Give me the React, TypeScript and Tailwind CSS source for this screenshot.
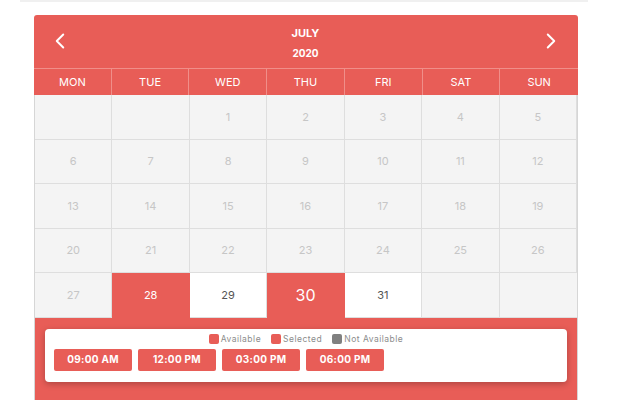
import { ChevronLeft, ChevronRight } from "lucide-react";

type Day = { n?: number; state?: "past" | "open" | "picked" | "today" };

const weekdays = ["MON", "TUE", "WED", "THU", "FRI", "SAT", "SUN"];

const days: Day[] = [
  {}, {},
  ...Array.from({ length: 27 }, (_, i) => ({ n: i + 1, state: "past" as const })),
  { n: 28, state: "picked" },
  { n: 29, state: "open" },
  { n: 30, state: "today" },
  { n: 31, state: "open" },
  {}, {},
];

const slots = ["09:00 AM", "12:00 PM", "03:00 PM", "06:00 PM"];

function Cell({ day }: { day: Day }) {
  const base = "h-[44.6px] flex items-center justify-center border-r border-b border-[#dedede] last:border-r-0";
  if (day.state === "picked")
    return <div className={`${base} bg-[#e85d57] text-white text-[11px] border-[#e85d57]`}>{day.n}</div>;
  if (day.state === "today")
    return <div className={`${base} bg-[#e85d57] text-white text-[16px] border-[#e85d57]`}>{day.n}</div>;
  if (day.state === "open")
    return <div className={`${base} bg-white text-[#555] text-[11px]`}>{day.n}</div>;
  return <div className={`${base} bg-[#f4f4f4] text-[#c6c6c6] text-[11px]`}>{day.n}</div>;
}

export default function App() {
  return (
    <div className="w-[620px] h-[400px] overflow-hidden bg-white font-['Inter',sans-serif]">
      <div className="ml-[20px] w-[568px] h-[2px] bg-[#f0f0f0]" />
      <div className="mt-[13px] ml-[34px] w-[544px]">
        {/* header */}
        <div className="bg-[#e85d57] rounded-t-[3px] h-[53px] flex items-center justify-between pl-[13px] pr-[14px] text-white">
          <ChevronLeft className="w-[26px] h-[26px] -mt-[2px]" strokeWidth={1.8} />
          <div className="flex flex-col items-center font-bold leading-none">
            <span className="text-[11px] mt-[2px]">JULY</span>
            <span className="text-[10px] mt-[9px]">2020</span>
          </div>
          <ChevronRight className="w-[26px] h-[26px] -mt-[2px]" strokeWidth={1.8} />
        </div>

        {/* weekday names */}
        <div className="grid grid-cols-7 bg-[#e85d57] border-t border-[#f08e89]">
          {weekdays.map((d) => (
            <div
              key={d}
              className="h-[26px] flex items-center justify-center text-white text-[11px] border-r border-[#f08e89] last:border-r-0"
            >
              {d}
            </div>
          ))}
        </div>

        {/* days */}
        <div className="grid grid-cols-7 border-x border-[#d6d6d6]">
          {days.map((d, i) => (
            <Cell key={i} day={d} />
          ))}
        </div>

        {/* time slots */}
        <div className="bg-[#e85d57] border-x border-[#d6d6d6] pt-[11px] px-[10px] h-[90px]">
          <div className="bg-white rounded-[4px] shadow-[0_2px_6px_rgba(0,0,0,0.25)] pt-[4px] pb-[11px] px-[9px]">
            <div className="flex justify-center gap-[10px] h-[12px] items-center text-[8.5px] text-[#8c8c8c] tracking-[0.5px]">
              <span className="flex items-center gap-[2px]">
                <span className="w-[10px] h-[10px] rounded-[2px] bg-[#e85d57]" />
                Available
              </span>
              <span className="flex items-center gap-[2px]">
                <span className="w-[10px] h-[10px] rounded-[2px] bg-[#e85d57]" />
                Selected
              </span>
              <span className="flex items-center gap-[2px]">
                <span className="w-[10px] h-[10px] rounded-[2px] bg-[#808080]" />
                Not Available
              </span>
            </div>
            <div className="flex gap-[6px] mt-[4px]">
              {slots.map((s) => (
                <button
                  key={s}
                  className="w-[78px] h-[22px] rounded-[2px] bg-[#e85d57] text-white text-[10px] font-bold tracking-[0.3px]"
                >
                  {s}
                </button>
              ))}
            </div>
          </div>
        </div>
      </div>
    </div>
  );
}
